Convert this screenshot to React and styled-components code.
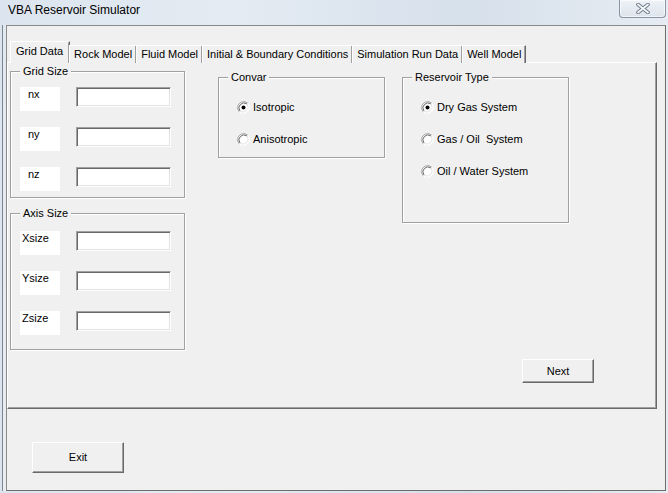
import React from "react";
import styled, { createGlobalStyle } from "styled-components";

const GlobalStyle = createGlobalStyle`
  html, body { margin: 0; padding: 0; background: #dbe4ee; }
  body { font-family: "Liberation Sans", Arial, sans-serif; font-size: 11px; color: #000; }
  * { box-sizing: border-box; }
`;

const Window = styled.div`
  width: 668px;
  height: 493px;
  display: flex;
  flex-direction: column;
  background: linear-gradient(90deg, #dce5ef 0%, #e4ebf3 35%, #d6e0eb 70%, #e6ecf2 100%);
  overflow: hidden;
`;

const TitleBar = styled.div`
  height: 25px;
  flex: none;
  display: flex;
  justify-content: space-between;
  align-items: flex-start;
  padding-left: 8px;
`;

const Title = styled.div`
  font-size: 12px;
  line-height: 14px;
  margin-top: 3px;
  color: #000;
`;

const CloseButton = styled.div`
  width: 47px;
  height: 18px;
  margin-right: 2px;
  border: 1px solid #8895a6;
  border-top: none;
  border-radius: 0 0 4px 4px;
  background: linear-gradient(#eef2f6, #dde4ec);
  display: flex;
  align-items: center;
  justify-content: center;
  box-shadow: inset 0 0 0 1px rgba(255, 255, 255, 0.6);
`;

const Frame = styled.div`
  flex: 1;
  display: flex;
  padding: 0 2px 3px 2px;
`;

const FrameEdge = styled.div`
  flex: 1;
  display: flex;
  border-left: 1px solid #7c8590;
  padding-left: 3px;
  background: linear-gradient(#e2e8ef, #e9edf2);
`;

const Client = styled.div`
  width: 660px;
  height: 466px;
  background: #f0f0f0;
  border: 1px solid #8a8a8a;
  border-bottom-color: #6c6c6c;
  border-right-color: #6c6c6c;
  padding-top: 15px;
  display: flex;
  flex-direction: column;
`;

const TabStrip = styled.div`
  display: flex;
  align-items: flex-end;
  height: 22px;
  padding-left: 3px;
  margin-bottom: -1px;
  position: relative;
  z-index: 1;
`;

const Tab = styled.div`
  height: ${(p) => (p.$active ? 22 : 18)}px;
  padding: ${(p) => (p.$active ? "3px 6px 0 5px" : "2px 4px 0 4px")};
  margin-left: ${(p) => (p.$active ? 0 : -1)}px;
  background: #f0f0f0;
  border-top: 1px solid #fff;
  border-left: 1px solid #fff;
  border-right: 1px solid #696969;
  box-shadow: inset -1px 0 0 #a0a0a0;
  white-space: nowrap;
  line-height: 13px;
  &:first-child { margin-left: 0; }
`;

const Panel = styled.div`
  width: 650px;
  height: 347px;
  margin-left: 0;
  border: 1px solid #fff;
  border-right-color: #696969;
  border-bottom-color: #696969;
  box-shadow: inset -1px -1px 0 #a0a0a0;
  padding: 8px 0 0 2px;
  display: flex;
  flex-direction: column;
`;

const TopArea = styled.div`
  display: flex;
  align-items: flex-start;
`;

const LeftColumn = styled.div`
  display: flex;
  flex-direction: column;
  gap: 15px;
`;

const GroupBox = styled.div`
  position: relative;
  width: ${(p) => p.$w}px;
  height: ${(p) => p.$h}px;
  margin-top: ${(p) => p.$top || 0}px;
  margin-left: ${(p) => p.$left || 0}px;
  border: 1px solid #a0a0a0;
  box-shadow: inset 1px 1px 0 #fff, 1px 1px 0 #fff;
  padding: ${(p) => p.$pad};
  display: flex;
  flex-direction: column;
  gap: ${(p) => p.$gap}px;
`;

const Legend = styled.span`
  position: absolute;
  top: -8px;
  left: 9px;
  padding: 0 3px;
  background: #f0f0f0;
  line-height: 14px;
`;

const FieldRow = styled.div`
  display: flex;
  align-items: flex-start;
  gap: 16px;
`;

const FieldLabel = styled.div`
  width: 40px;
  height: 24px;
  background: #fff;
  padding: 1px 0 0 ${(p) => p.$indent}px;
  line-height: 13px;
`;

const TextBox = styled.div`
  width: 95px;
  height: 20px;
  background: #fff;
  border: 1px solid;
  border-color: #a0a0a0 #fff #fff #a0a0a0;
  box-shadow: inset 1px 1px 0 #696969, inset -1px -1px 0 #e3e3e3;
`;

const RadioRow = styled.div`
  display: flex;
  align-items: center;
  gap: 3px;
  height: 16px;
  line-height: 13px;
  white-space: pre;
`;

const NextRow = styled.div`
  display: flex;
  justify-content: flex-end;
  padding-right: 62px;
  margin-top: 9px;
`;

const Button = styled.div`
  width: ${(p) => p.$w}px;
  height: ${(p) => p.$h}px;
  background: #f0f0f0;
  border: 1px solid;
  border-color: #fff #696969 #696969 #fff;
  box-shadow: inset -1px -1px 0 #a0a0a0;
  display: flex;
  align-items: center;
  justify-content: center;
  line-height: 13px;
`;

const Footer = styled.div`
  padding: 33px 0 0 25px;
`;

function Radio({ checked }) {
  return (
    <svg width="13" height="13" viewBox="0 0 13 13">
      <circle cx="6.5" cy="6.5" r="5.5" fill="#fff" />
      <path d="M2.26 10.74 A6 6 0 0 1 10.74 2.26" stroke="#a0a0a0" fill="none" />
      <path d="M10.74 2.26 A6 6 0 0 1 2.26 10.74" stroke="#fff" fill="none" />
      <path d="M3 10 A5 5 0 0 1 10 3" stroke="#696969" fill="none" />
      <path d="M10 3 A5 5 0 0 1 3 10" stroke="#e3e3e3" fill="none" />
      {checked && <circle cx="6.5" cy="6.5" r="2" fill="#000" />}
    </svg>
  );
}

function Field({ label, indent }) {
  return (
    <FieldRow>
      <FieldLabel $indent={indent}>{label}</FieldLabel>
      <TextBox />
    </FieldRow>
  );
}

function RadioGroup({ title, options, h, left }) {
  return (
    <GroupBox $w={167} $h={h} $top={6} $left={left} $pad="21px 0 0 18px" $gap={16}>
      <Legend>{title}</Legend>
      {options.map((o, i) => (
        <RadioRow key={o}>
          <Radio checked={i === 0} />
          <span>{o}</span>
        </RadioRow>
      ))}
    </GroupBox>
  );
}

const tabs = [
  "Grid Data",
  "Rock Model",
  "Fluid Model",
  "Initial & Boundary Conditions",
  "Simulation Run Data",
  "Well Model",
];

export default function App() {
  return (
    <>
      <GlobalStyle />
      <Window>
        <TitleBar>
          <Title>VBA Reservoir Simulator</Title>
          <CloseButton>
            <svg width="14" height="11" viewBox="0 0 14 11">
              <path
                d="M2 1.5 L12 9.5 M12 1.5 L2 9.5"
                stroke="#6d7a8a"
                strokeWidth="3.6"
                strokeLinecap="round"
                fill="none"
              />
              <path
                d="M2 1.5 L12 9.5 M12 1.5 L2 9.5"
                stroke="#f4f6f9"
                strokeWidth="1.8"
                strokeLinecap="round"
                fill="none"
              />
            </svg>
          </CloseButton>
        </TitleBar>
        <Frame>
          <FrameEdge>
            <Client>
              <TabStrip>
                {tabs.map((t, i) => (
                  <Tab key={t} $active={i === 0}>
                    {t}
                  </Tab>
                ))}
              </TabStrip>
              <Panel>
                <TopArea>
                  <LeftColumn>
                    <GroupBox $w={175} $h={127} $pad="15px 0 0 9px" $gap={16}>
                      <Legend>Grid Size</Legend>
                      <Field label="nx" indent={8} />
                      <Field label="ny" indent={8} />
                      <Field label="nz" indent={8} />
                    </GroupBox>
                    <GroupBox $w={175} $h={137} $pad="17px 0 0 9px" $gap={16}>
                      <Legend>Axis Size</Legend>
                      <Field label="Xsize" indent={2} />
                      <Field label="Ysize" indent={2} />
                      <Field label="Zsize" indent={2} />
                    </GroupBox>
                  </LeftColumn>
                  <RadioGroup
                    title="Convar"
                    options={["Isotropic", "Anisotropic"]}
                    h={81}
                    left={33}
                  />
                  <RadioGroup
                    title="Reservoir Type"
                    options={["Dry Gas System", "Gas / Oil  System", "Oil / Water System"]}
                    h={146}
                    left={17}
                  />
                </TopArea>
                <NextRow>
                  <Button $w={72} $h={24}>Next</Button>
                </NextRow>
              </Panel>
              <Footer>
                <Button $w={92} $h={31}>Exit</Button>
              </Footer>
            </Client>
          </FrameEdge>
        </Frame>
      </Window>
    </>
  );
}
